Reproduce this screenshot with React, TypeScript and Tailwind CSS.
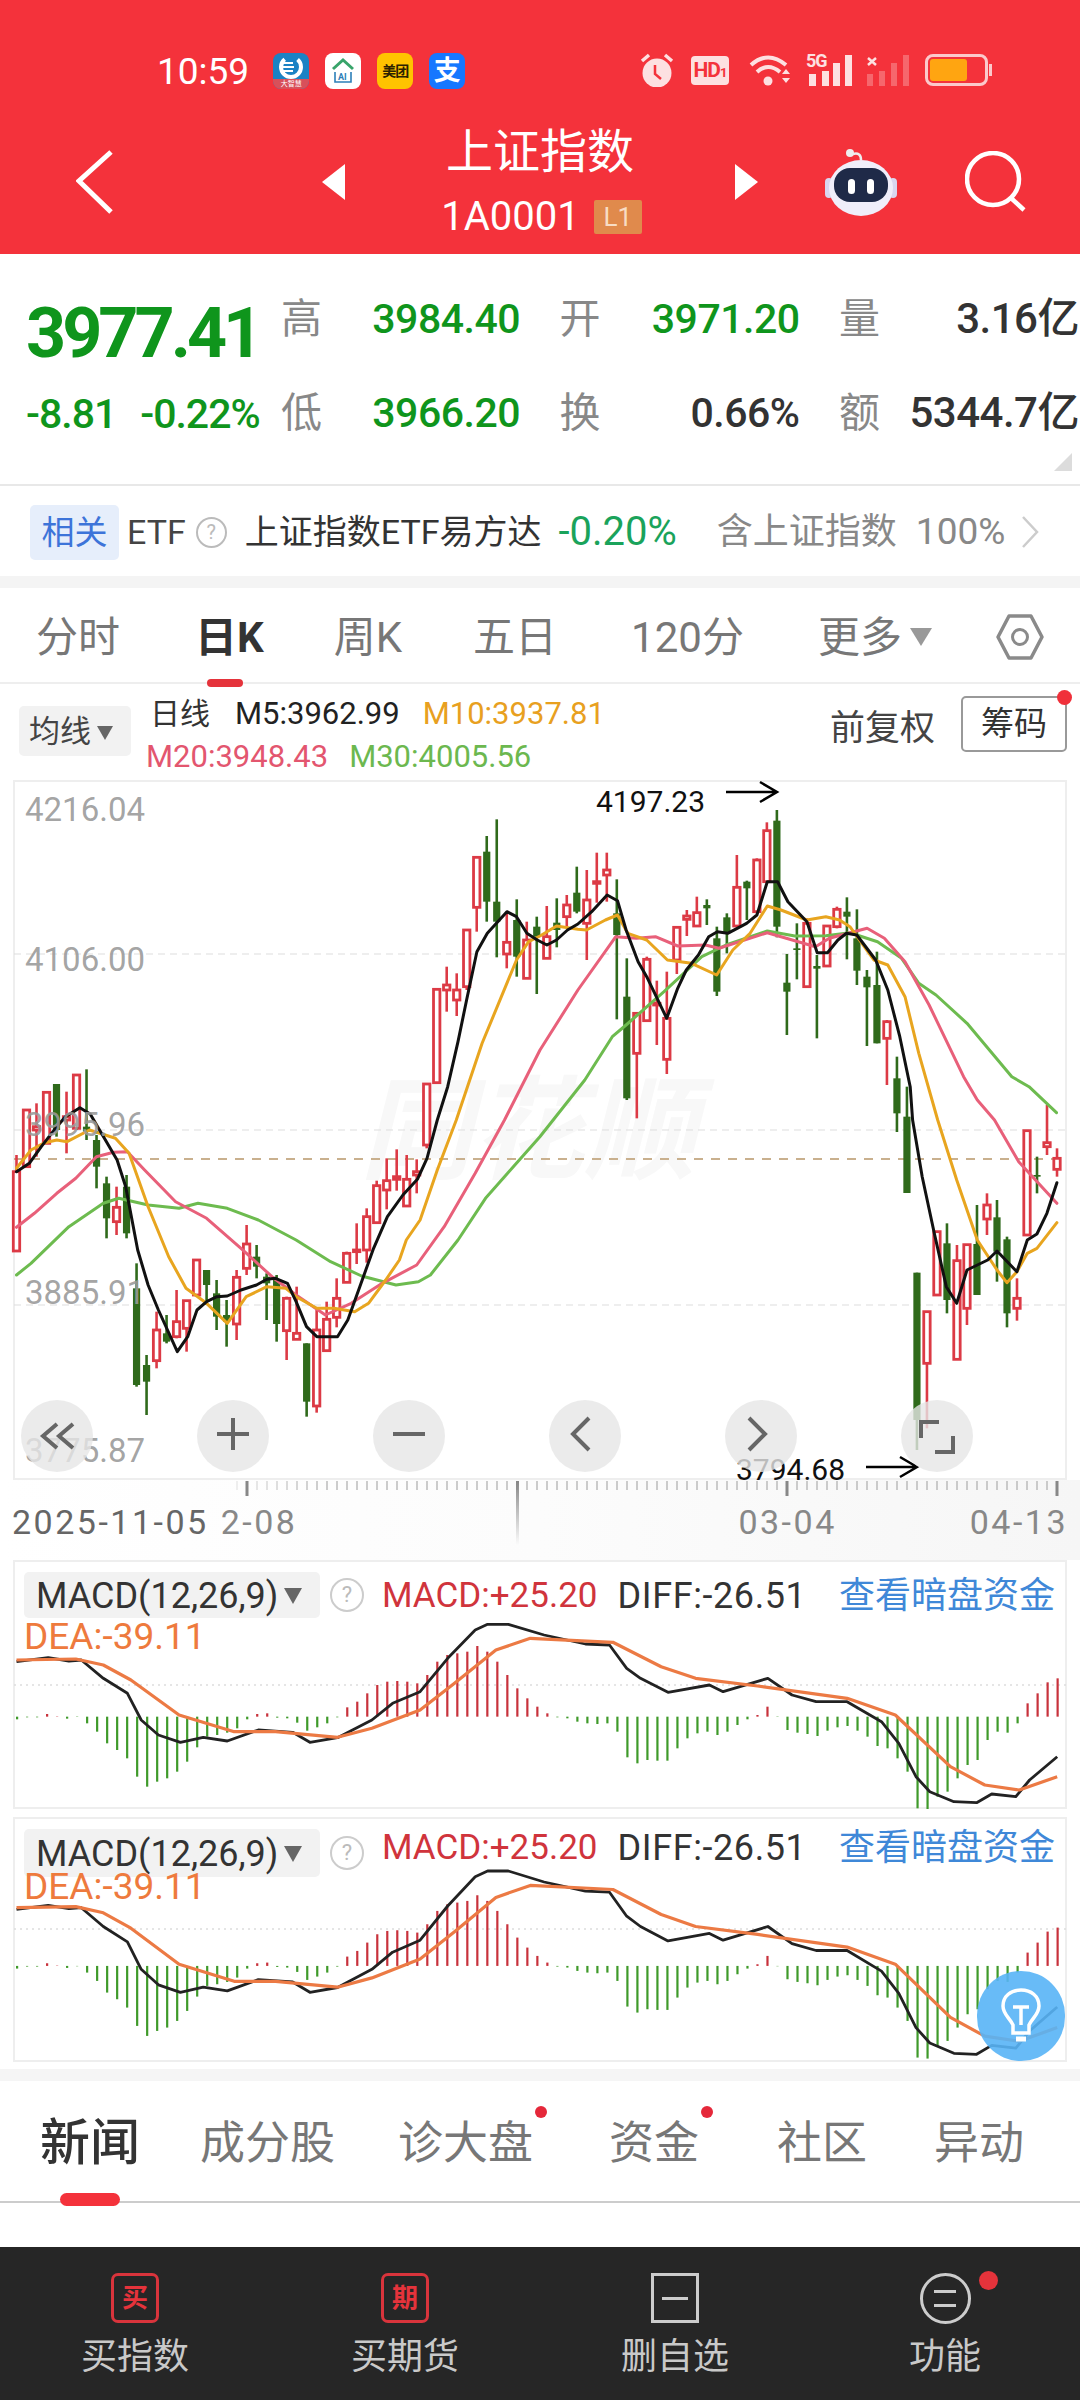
import React from 'react';

// page coordinates for the points read off the reference
const map = (ox: number, oy: number, sx: number) => (flat: number[]) => {
  const out: number[][] = [];
  for (let i = 0; i < flat.length; i += 2) out.push([ox + flat[i] / sx, oy + flat[i + 1] / 3]);
  return out;
};
const z3 = map(0, 770, 2.904);
const z4 = map(540, 770, 2.904);
const z5 = map(0, 1120, 2.904);
const z6 = map(540, 1120, 2.904);
const toPts = (p: number[][]) => p.map(([x, y]) => `${x.toFixed(1)},${y.toFixed(1)}`).join(' ');

const ma5 = [
  ...z5([48,155,85,130,120,80,165,20,190,-10]),
  ...z3([232,1013,262,1032]),
  ...z5([340,120,365,200,400,390,430,495,460,570,515,695,545,650,572,570,600,545,630,530,660,528,700,510,745,495,775,478,800,475,835,490,860,545,890,620,920,650,980,650,1010,600,1045,500,1085,385,1125,290,1170,225,1212,178,1240,115,1270,0]),
  ...z3([1300,950,1330,815,1355,690,1385,545,1415,490,1472,425,1500,440,1530,490,1560,510]),
  ...z4([20,525,48,510,80,480,110,462,150,425,195,375,225,392,250,480,285,575,310,620,368,745,400,655,425,600,460,555,490,500,515,485,545,490,600,460,630,435,660,335,690,335,720,395,775,455,805,548,835,548,865,510,890,490,920,495,975,570,1010,660,1045,800,1075,950,1082,1050]),
  ...z6([1110,170,1145,340,1180,500,1210,550,1240,450,1300,420,1327,393,1385,455,1415,360,1443,342,1472,280,1501,188]),
];
const ma10 = [
  ...z5([48,145,90,90,130,68,165,60,195,65,260,30,335,55,375,100,430,260,490,410,540,505,600,550,660,610,715,530,775,500,830,505,860,530,920,565,970,565,1030,575,1070,550,1120,480,1160,420,1180,360,1220,300,1270,150,1325,0]),
  ...z3([1400,820,1500,570,1535,515]),
  ...z4([0,498,48,468,110,478,135,480,190,450,225,435,255,490,310,510,370,570,440,580,513,615,560,540,610,490,660,408,700,420,775,450,830,440,870,450,900,470,970,570,1010,585,1060,680,1100,850,1155,1050]),
  ...z6([1210,180,1270,360,1327,450,1356,488,1385,455,1415,400,1443,385,1501,308]),
];
const ma20 = [
  ...z5([48,322,100,280,165,220,220,175,280,110,330,97,370,95,420,150,510,245,600,295,700,385,790,470,860,525,945,585,1020,550,1110,490,1210,435,1290,320,1380,160,1465,0]),
  ...z4([0,840,110,660,220,500,280,505,335,500,400,528,480,525,520,535,660,488,800,530,840,505,950,475,1000,505,1060,575,1130,705,1230,920,1270,990,1320,1050]),
  ...z6([1390,125,1501,250]),
];
const ma30 = [
  ...z5([48,465,90,430,200,320,300,250,345,235,430,255,520,265,575,250,660,265,750,300,860,360,960,425,1050,468,1150,495,1215,485,1250,465,1330,360,1410,235,1568,50]),
  ...z4([130,930,210,800,250,765,360,665,470,560,540,525,660,483,740,498,830,497,900,488,980,515,1050,565,1100,640,1150,675,1240,760,1370,920,1420,950,1500,1028]),
];

// [wickTop, bodyTop, bodyBottom, wickBottom, up]
const groups: { base: number; rows: number[][] }[] = [
  { base: 1060, rows: [[285,335,573,573,1],[150,150,320,320,1],[130,200,210,290,1],[97,97,250,250,1],[72,72,210,230,0],[95,170,180,280,1],[45,45,205,210,1],[28,200,215,240,0],[225,240,320,385,0]] },
  { base: 1120, rows: [
    [170,190,295,355,0],[200,262,305,345,1],[165,200,340,355,0],[430,505,795,800,0],[705,735,785,885,0],[575,630,722,745,1],[585,640,665,670,0],[510,605,650,655,1],[540,542,625,695,1],[420,420,525,530,1],[450,450,495,555,0],[480,520,590,630,0],[540,585,605,680,0],[450,472,612,660,1],[315,372,445,465,1],[375,410,440,475,0],[460,470,490,600,0],[465,480,612,665,0],[530,535,632,720,1],[500,640,658,660,1],[670,670,845,890,0],[570,630,858,878,1],[545,598,692,695,1],[475,535,592,622,1],[395,400,487,488,1],[310,390,395,432,1],[265,290,390,428,1],[182,197,308,310,1],[115,182,210,268,1],[88,170,178,212,1],[105,178,258,260,1],[118,155,165,220,1],[-108,-108,75,85,1],
  ] },
  { base: 770, rows: [
    [658,658,938,938,1],[590,645,660,725,1],[610,660,690,738,1],[480,480,650,660,1],[262,262,412,485,1],[198,245,395,455,0],[148,395,455,562,0],[425,517,552,595,1],[388,450,560,620,0],[455,510,625,625,1],[440,470,500,672,0],
    [408,500,565,565,1],[385,458,480,532,0],[375,405,440,470,1],[290,368,425,430,0],[300,390,460,570,1],[248,335,340,398,1],[248,300,315,395,1],[328,430,495,748,0],[565,680,985,990,0],[730,730,850,1045,1],[560,568,752,755,1],[632,700,705,825,1],[605,745,868,912,1],[470,472,570,612,1],[420,438,448,498,1],[380,428,468,470,1],[388,405,415,465,0],[470,505,665,678,0],[430,442,490,550,0],[255,352,468,470,1],[332,335,355,450,0],[265,270,425,430,1],[157,182,335,335,1],[120,152,470,502,0],[552,638,665,795,0],[460,535,540,628,0],[445,460,650,650,1],[555,588,596,805,0],[465,468,588,590,1],[410,418,470,475,1],[382,425,440,568,0],[418,505,602,645,0],[600,620,652,828,0],[545,645,820,820,0],[750,755,805,945,1],[860,925,1030,1086,0],[950,1040,1269,1269,0],
  ] },
  { base: 1120, rows: [
    [458,458,900,990,0],[575,575,730,925,1],[335,335,525,525,1],[310,370,540,580,0],[375,422,718,720,1],[372,374,565,615,1],[255,372,525,525,0],[220,255,297,345,1],[240,292,395,485,0],[350,358,580,622,0],[475,535,565,602,1],[32,32,345,345,1],[110,165,170,220,0],[-45,68,80,105,1],[85,115,148,170,1],
  ] },
];
const candles = groups.flatMap((g) => g.rows.map((r) => ({ wt: g.base + r[0] / 3, bt: g.base + r[1] / 3, bb: g.base + r[2] / 3, wb: g.base + r[3] / 3, up: r[4] === 1 })));

const bars = [-8,-2,-2,8,1,-6,-1,-20,-45,-80,-100,-125,-180,-210,-195,-185,-165,-135,-92,-60,-55,-48,-35,-8,8,10,-3,-5,-18,-42,-32,-20,-2,28,45,70,95,105,107,105,100,125,165,185,190,195,212,195,165,125,85,55,30,10,-2,-5,-15,-20,-22,-20,-45,-122,-140,-130,-132,-132,-95,-65,-50,-45,-55,-45,-25,-8,5,30,-1,-40,-48,-52,-58,-42,-32,-28,-42,-60,-88,-95,-125,-165,-275,-278,-240,-225,-185,-145,-130,-70,-45,-48,-20,40,70,103,115];
const diff = [24,335,70,323,100,333,118,330,150,385,185,430,205,510,230,555,262,577,295,562,330,573,375,540,425,547,450,577,490,563,540,510,570,460,610,425,650,325,690,240,708,223,738,223,790,255,850,282,885,285,910,355,930,385,970,427,1030,405,1050,425,1115,385,1150,435,1185,455,1230,455,1280,515,1305,580,1330,680,1350,725,1385,755,1418,758,1440,732,1475,740,1495,690,1535,620];
const dea = [24,330,110,327,150,345,190,390,260,495,340,545,400,545,490,562,540,535,610,480,660,400,720,300,770,265,890,277,960,350,1010,385,1100,408,1230,445,1300,495,1380,650,1430,705,1480,720,1535,680];

const StatusIcons = () => (
  <div className="ml-auto mr-[88px] flex items-center">
    <svg width="34" height="34" viewBox="0 0 34 34" className="mr-[17px]">
      <circle cx="17" cy="20" r="14.5" fill="#fde0e1" />
      <path d="M2 8 L9 2 M32 8 L25 2" stroke="#fde0e1" strokeWidth="3.5" />
      <path d="M15 12 L15 21 L21 26" stroke="#f4323b" strokeWidth="2.5" fill="none" />
    </svg>
    <div className="w-[38px] h-[29px] mr-[20px] rounded-[4px] bg-[#fde0e1] flex items-baseline justify-center text-[#f4323b] font-bold text-[21px] leading-[29px] tracking-[-1px]">
      HD<span className="text-[13px]">1</span>
    </div>
    <svg width="43" height="32" viewBox="0 0 43 32" className="mr-[14px]">
      <g fill="none" stroke="#fde0e1" strokeWidth="4">
        <path d="M2 11 Q19 -4 37 11" />
        <path d="M8 18 Q19 8 31 18" />
      </g>
      <circle cx="19" cy="27" r="4.5" fill="#fde0e1" />
      <path d="M33 20 L37 15 L41 20 Z M33 24 L41 24 L37 29 Z" fill="#fde0e1" />
    </svg>
    <div className="relative w-[48px] h-[32px] mr-[12px]">
      <span className="absolute left-0 -top-[2px] text-[18px] leading-[18px] font-bold text-[#fde0e1] tracking-[-1px]">5G</span>
      <svg width="48" height="32" viewBox="0 0 48 32">
        <g fill="#fde0e1">
          <rect x="3" y="20" width="7" height="12" />
          <rect x="16" y="17" width="7" height="15" />
          <rect x="27" y="9" width="7" height="23" />
          <rect x="39" y="1" width="7" height="31" />
        </g>
      </svg>
    </div>
    <svg width="44" height="32" viewBox="0 0 44 32" className="mr-[15px]">
      <path d="M2 4 L10 11 M10 4 L2 11" stroke="#fde0e1" strokeWidth="2.5" />
      <g fill="#fde0e1" opacity="0.3">
        <rect x="1" y="20" width="6" height="12" />
        <rect x="13" y="17" width="6" height="15" />
        <rect x="25" y="9" width="6" height="23" />
        <rect x="37" y="1" width="6" height="31" />
      </g>
    </svg>
    <div className="w-[63px] h-[32px] rounded-[8px] border-[3px] border-[#fbc9cb] p-[2px]">
      <div className="w-[37px] h-full rounded-[3px] bg-[#ffa511]" />
    </div>
    <div className="w-[3px] h-[12px] ml-[1px] bg-[#fbc9cb]" />
  </div>
);

const AppIcons = () => (
  <div className="flex ml-[24px] gap-[16px]">
    <div className="w-[36px] h-[36px] rounded-[8px] bg-[#1b82c4] flex flex-col items-center overflow-hidden">
      <svg width="26" height="26" viewBox="0 0 26 26">
        <circle cx="13" cy="14" r="10" fill="none" stroke="#fff" strokeWidth="4" strokeDasharray="40 14" />
        <path d="M4 10 H15 M4 14 H16 M4 18 H15" stroke="#fff" strokeWidth="2" />
      </svg>
      <div className="w-full flex-1 bg-[#d8505a] text-white text-[7px] leading-[10px] text-center">大智慧</div>
    </div>
    <div className="w-[36px] h-[36px] rounded-[8px] bg-white flex items-center justify-center">
      <svg width="28" height="28" viewBox="0 0 28 28">
        <path d="M4 12 L14 3 L24 12" fill="none" stroke="#38a46a" strokeWidth="3" />
        <path d="M6 15 V25 H22 V15" fill="none" stroke="#2c7fb8" strokeWidth="1.6" />
        <text x="9" y="23" fontSize="9" fontWeight="700" fill="#2c7fb8" fontFamily="Roboto">AI</text>
      </svg>
    </div>
    <div className="w-[36px] h-[36px] rounded-[8px] bg-[#ffc300] flex items-center justify-center text-[14px] font-bold text-[#2c2200] tracking-[-1px]">美团</div>
    <div className="w-[36px] h-[36px] rounded-[8px] bg-[#1677ff] flex items-center justify-center text-[27px] text-white font-bold">支</div>
  </div>
);

const Header = () => (
  <div className="h-[254px] shrink-0 bg-[#f4323b] text-white flex flex-col">
    <div className="h-[125px] shrink-0 pt-[53px] pl-[157px] flex items-start">
      <span className="text-[37px] leading-[38px]">10:59</span>
      <AppIcons />
      <StatusIcons />
    </div>
    <div className="flex-1 pb-[15px] pl-[76px] flex items-center">
      <svg width="38" height="66" viewBox="0 0 38 66">
        <path d="M35 3 L3 32 L35 63" fill="none" stroke="#fff" strokeWidth="5" />
      </svg>
      <svg width="24" height="36" viewBox="0 0 24 36" className="ml-[208px]">
        <path d="M23 0 V36 L0 18 Z" fill="#fff" />
      </svg>
      <div className="w-[388px] flex flex-col items-center">
        <div className="text-[47px] leading-[50px]">上证指数</div>
        <div className="mt-[20px] h-[40px] flex items-center">
          <span className="text-[40px] leading-[40px] ml-[3px]">1A0001</span>
          <span className="ml-[14px] w-[48px] h-[34px] bg-[#e08a4c] rounded-[2px] text-[#f8dcc4] text-[26px] leading-[34px] text-center">L1</span>
        </div>
      </div>
      <svg width="24" height="36" viewBox="0 0 24 36">
        <path d="M1 0 V36 L24 18 Z" fill="#fff" />
      </svg>
      <svg width="72" height="68" viewBox="0 0 72 68" className="ml-[67px]">
        <path d="M36 12 Q36 4 28 6" fill="none" stroke="#eee" strokeWidth="2.5" />
        <circle cx="25" cy="5" r="4" fill="#eee" />
        <rect x="0" y="30" width="8" height="20" rx="4" fill="#d9d6ef" />
        <rect x="64" y="30" width="8" height="20" rx="4" fill="#d9d6ef" />
        <ellipse cx="36" cy="40" rx="32" ry="28" fill="#f0eefa" />
        <rect x="9" y="20" width="54" height="34" rx="16" fill="#1f2a48" />
        <rect x="23" y="31" width="7" height="15" rx="3.5" fill="#fff" />
        <rect x="42" y="31" width="7" height="15" rx="3.5" fill="#fff" />
      </svg>
      <svg width="62" height="62" viewBox="0 0 62 62" className="ml-[68px]">
        <circle cx="28" cy="28" r="26" fill="none" stroke="#fff" strokeWidth="4.5" />
        <path d="M46 47 L59 59" stroke="#fff" strokeWidth="4.5" />
      </svg>
    </div>
  </div>
);

const Cell = ({ label, value, green, big }: { label: string; value: string; green?: boolean; big?: boolean }) => (
  <div className="flex justify-between items-center h-[56px] pt-[2px]">
    <span className="text-[41px] leading-[54px] text-[#888]">{label}</span>
    <span className={`leading-[54px] font-medium ${big ? 'text-[42px] tracking-[-0.5px]' : 'text-[41px] tracking-[-0.5px]'} ${green ? 'text-[#0f951c]' : 'text-[#333]'}`}>{value}</span>
  </div>
);

const Quote = () => (
  <div className="relative h-[232px] shrink-0 border-b-2 border-[#e8e8e8] flex">
    <div className="w-[281px] shrink-0 pl-[26px] pt-[44px]">
      <div className="text-[70px] leading-[70px] font-bold text-[#0f951c] tracking-[-4px]">3977.41</div>
      <div className="mt-[26px] flex text-[41px] leading-[40px] font-medium text-[#0f951c] tracking-[-1px]">
        <span>-8.81</span>
        <span className="ml-[24px]">-0.22%</span>
      </div>
    </div>
    <div className="pt-[36px] w-[799px] grid grid-cols-[239px_240px_240px] gap-x-[39.5px] gap-y-[38px] content-start">
      <Cell label="高" value="3984.40" green />
      <Cell label="开" value="3971.20" green />
      <Cell label="量" value="3.16亿" big />
      <Cell label="低" value="3966.20" green />
      <Cell label="换" value="0.66%" />
      <Cell label="额" value="5344.7亿" big />
    </div>
    <svg width="18" height="18" viewBox="0 0 18 18" className="absolute left-[1054px] top-[199px]">
      <path d="M18 0 V18 H0 Z" fill="#dcdcdc" />
    </svg>
  </div>
);

const EtfRow = () => (
  <div className="h-[90px] shrink-0 pl-[30px] pt-[2px] flex items-center text-[34px]">
    <div className="w-[89px] h-[55px] rounded-[5px] bg-[#e6eefb] text-[#3d74d9] text-[33px] leading-[55px] text-center">相关</div>
    <span className="ml-[8px] text-[#444]">ETF</span>
    <span className="ml-[10px] w-[31px] h-[31px] rounded-full border-2 border-[#bbb] text-[#bbb] text-[20px] leading-[27px] text-center">?</span>
    <span className="ml-[18px] text-[#333] whitespace-nowrap text-[34px]">上证指数ETF易方达</span>
    <span className="ml-[17px] text-[#1aa35b] text-[40px]">-0.20%</span>
    <span className="ml-[40px] text-[#888] text-[36px]">含上证指数</span>
    <span className="ml-[19px] text-[#888] text-[37px]">100%</span>
    <svg width="18" height="34" viewBox="0 0 18 34" className="ml-[16px]">
      <path d="M2 2 L16 17 L2 32" fill="none" stroke="#ccc" strokeWidth="2.5" />
    </svg>
  </div>
);

const PeriodTabs = () => (
  <div className="h-[96px] shrink-0 pt-[4px] border-b-2 border-[#eee] flex items-center text-[42px] text-[#777]">
    <span className="ml-[36px]">分时</span>
    <span className="ml-[75px] relative font-bold text-[#333]">
      日K
      <span className="absolute left-[12px] bottom-[-18px] w-[36px] h-[8px] rounded-full bg-[#e5333b]" />
    </span>
    <span className="ml-[70px]">周K</span>
    <span className="ml-[71px]">五日</span>
    <span className="ml-[74px]">120分</span>
    <span className="ml-[74px]">更多</span>
    <svg width="22" height="18" viewBox="0 0 22 18" className="ml-[8px]">
      <path d="M0 0 H22 L11 18 Z" fill="#999" />
    </svg>
    <svg width="48" height="46" viewBox="0 0 48 46" className="ml-[64px]">
      <path d="M2 23 L13 2 H35 L46 23 L35 44 H13 Z" fill="none" stroke="#8a8a8a" strokeWidth="3.5" strokeLinejoin="round" />
      <circle cx="24" cy="23" r="7.5" fill="none" stroke="#8a8a8a" strokeWidth="3" />
    </svg>
  </div>
);

const Legend = () => (
  <div className="h-[96px] shrink-0 flex">
    <div className="ml-[19px] mt-[22px] w-[112px] h-[50px] rounded-[5px] bg-[#f2f2f2] flex items-center pl-[10px] pt-[3px] text-[31px] text-[#444]">
      均线
      <svg width="16" height="14" viewBox="0 0 16 14" className="ml-[6px]">
        <path d="M0 0 H16 L8 14 Z" fill="#666" />
      </svg>
    </div>
    <div className="ml-[19px] pt-[10px] text-[31px] leading-[40px]">
      <div className="flex">
        <span className="text-[#333] text-[30px]">日线</span>
        <span className="ml-[25px] text-[#222]">M5:3962.99</span>
        <span className="ml-[23px] text-[#e8a020]">M10:3937.81</span>
      </div>
      <div className="flex mt-[3px] -ml-[4px]">
        <span className="text-[#e3566f]">M20:3948.43</span>
        <span className="ml-[21px] text-[#6cb84f]">M30:4005.56</span>
      </div>
    </div>
    <span className="ml-auto mt-[23px] text-[35px] leading-[44px] text-[#444]">前复权</span>
    <div className="relative ml-[26px] mr-[13px] mt-[12px] w-[106px] h-[56px] rounded-[5px] border-2 border-[#999] text-[#333] text-[33px] leading-[52px] text-center">
      筹码
      <span className="absolute right-[-7px] top-[-8px] w-[15px] h-[15px] rounded-full bg-[#f0303a]" />
    </div>
  </div>
);

const KChart = () => (
  <div className="relative mx-[13px] h-[700px] w-[1054px] shrink-0 border-2 border-[#eee]">
    <span className="absolute left-[345px] top-[290px] text-[112px] leading-[120px] font-bold italic text-[#f8f8f8] whitespace-nowrap">同花顺</span>
    <svg width="1054" height="700" viewBox="13 780 1054 700" className="absolute -left-[2px] -top-[2px] overflow-visible">
      <g stroke="#ddd" strokeWidth="1" strokeDasharray="7 5">
        <path d="M14 954 H1066 M14 1130 H1066 M14 1305 H1066" />
      </g>
      <path d="M14 1159 H1066" stroke="#c9b08e" strokeWidth="2" strokeDasharray="9 8" />
      {candles.map((c, i) => {
        const x = 16.5 + 10.005 * i;
        const color = c.up ? '#dc3a45' : '#2f6a1b';
        return (
          <g key={i}>
            <path d={`M${x} ${c.wt} V${c.wb}`} stroke={color} strokeWidth="2.6" />
            {c.up ? (
              <rect x={x - 3.2} y={c.bt} width="6.4" height={Math.max(c.bb - c.bt, 1)} fill="#fff" stroke={color} strokeWidth="2.8" />
            ) : (
              <rect x={x - 3.6} y={c.bt} width="7.2" height={Math.max(c.bb - c.bt, 1)} fill={color} />
            )}
          </g>
        );
      })}
      <g fill="none" strokeWidth="3" strokeLinejoin="round" strokeLinecap="round">
        <polyline points={toPts(ma30)} stroke="#6dbb4f" />
        <polyline points={toPts(ma20)} stroke="#e8607a" />
        <polyline points={toPts(ma10)} stroke="#e8a51f" />
        <polyline points={toPts(ma5)} stroke="#111" />
      </g>
      <g fill="none" stroke="#000" strokeWidth="2.5">
        <path d="M726 792 H776 M760 782 L777 792 L760 802" />
        <path d="M866 1467 H916 M900 1457 L917 1467 L900 1477" />
      </g>
    </svg>
    {[
      ['4216.04', 'top-[8px]'],
      ['4106.00', 'top-[158px]'],
      ['3995.96', 'top-[323px]'],
      ['3885.91', 'top-[491px]'],
      ['3775.87', 'top-[649px]'],
    ].map(([t, top]) => (
      <span key={t} className={`absolute left-[10px] ${top} text-[33px] leading-[40px] text-[#999]/90`}>{t}</span>
    ))}
    <span className="absolute left-[581px] top-[3px] text-[30px] leading-[34px] text-[#111]">4197.23</span>
    <span className="absolute left-[721px] top-[671px] text-[30px] leading-[34px] text-[#111]">3794.68</span>
    <div className="absolute left-[6px] top-[618px] w-[952px] flex justify-between">
      {[
        <path key="a" d="M18 8 L4 20 L18 32 M34 8 L20 20 L34 32" />,
        <path key="b" d="M18 2 V34 M2 18 H34" />,
        <path key="c" d="M2 18 H34" />,
        <path key="d" d="M22 2 L6 18 L22 34" />,
        <path key="e" d="M6 2 L22 18 L6 34" />,
        <path key="f" d="M20 6 H2 V22 M16 36 H34 V20" />,
      ].map((icon, i) => (
        <div key={i} className="w-[72px] h-[72px] rounded-full bg-[#e6e6e6]/80 flex items-center justify-center">
          <svg width="36" height="40" viewBox="0 0 36 40" fill="none" stroke="#666" strokeWidth="4">{icon}</svg>
        </div>
      ))}
    </div>
  </div>
);

const Axis = () => (
  <div className="relative h-[80px] shrink-0 bg-linear-to-r from-white via-[#fcfcfc] to-[#f6f6f6] overflow-hidden">
    <svg width="1080" height="80" viewBox="0 1480 1080 80" className="absolute inset-0">
      <defs>
        <linearGradient id="tail" x1="0" y1="0" x2="0" y2="1">
          <stop offset="0" stopColor="#888" />
          <stop offset="1" stopColor="#888" stopOpacity="0" />
        </linearGradient>
      </defs>
      {Array.from({ length: 83 }, (_, i) => (
        <path key={i} d={`M${237 + 10 * i} 1481 V1490`} stroke="#bbb" strokeWidth="1.5" opacity={Math.min(1, 0.3 + i * 0.08)} />
      ))}
      <path d="M247 1481 V1496 M787 1481 V1496 M1057 1481 V1496" stroke="#888" strokeWidth="3" />
      <rect x="516" y="1481" width="3" height="64" fill="url(#tail)" />
    </svg>
    <div className="absolute left-[12px] top-[22px] flex text-[34px] leading-[40px] tracking-[2.5px] whitespace-nowrap text-[#888]">
      <span className="text-[#666]">2025-11-05</span>
      <span className="ml-[12px]">2-08</span>
      <span className="ml-[441px]">03-04</span>
      <span className="ml-[133px]">04-13</span>
    </div>
  </div>
);

const MacdPanel = ({ second }: { second?: boolean }) => {
  const base = second ? 1817 : 1560;
  const h = second ? 245 : 249;
  const fy = (y: number) => (second ? 1550 + (y + 740 + (y - 223) * 0.028) / 3 : 1550 + y / 3);
  const line = (flat: number[]) => {
    const p: number[][] = [];
    for (let i = 0; i < flat.length; i += 2) p.push([flat[i] / 1.452, fy(flat[i + 1])]);
    return toPts(p);
  };
  const up = second ? 'mb-[12px]' : '';
  return (
    <div className={`relative mx-[13px] w-[1054px] shrink-0 border-2 border-[#eee] ${second ? 'h-[245px] mt-[8px]' : 'h-[249px]'}`}>
      <svg width="1054" height={h} viewBox={`13 ${base} 1054 ${h}`} className="absolute -left-[2px] -top-[2px]">
        <path d={`M14 ${fy(second ? 392 : 405)} H1066`} stroke="#ddd" strokeWidth="1.5" strokeDasharray="2 4" />
        {bars.map((v, i) => (
          <rect
            key={i}
            x={16 + 10.005 * i}
            y={v > 0 ? fy(500) - v / 3 : fy(500)}
            width="2.2"
            height={Math.abs(v) / 3}
            fill={v > 0 ? '#c8323c' : '#3f9a2a'}
          />
        ))}
        <g fill="none" strokeLinejoin="round">
          <polyline points={line(diff)} stroke="#222" strokeWidth="2.8" />
          <polyline points={line(dea)} stroke="#ec7a44" strokeWidth="3.2" />
        </g>
      </svg>
      <div className="relative">
        <div className={`flex items-center pt-[10px] leading-[46px] ${second ? 'h-[58px]' : 'h-[56px]'}`}>
          <div className={`ml-[9px] w-[296px] rounded-[5px] bg-[#f2f2f2] flex items-center pl-[12px] pt-[2px] text-[#333] text-[36px] ${second ? 'h-[48px]' : 'h-[46px]'}`}>
            MACD(12,26,9)
            <svg width="18" height="16" viewBox="0 0 18 16" className="ml-[6px]">
              <path d="M0 0 H18 L9 16 Z" fill="#666" />
            </svg>
          </div>
          <span className="ml-[10px] w-[34px] h-[34px] rounded-full border-2 border-[#ccc] text-[#bbb] text-[22px] leading-[30px] text-center">?</span>
          <span className={`ml-[18px] pt-[2px] text-[#d0343c] text-[35px] ${up}`}>MACD:+25.20</span>
          <span className={`ml-[20px] pt-[2px] text-[#333] text-[36px] tracking-[0.6px] ${up}`}>DIFF:-26.51</span>
          <span className={`ml-auto mr-[10px] pt-[2px] text-[#3f88d8] text-[36px] ${up}`}>查看暗盘资金</span>
        </div>
        <div className={`ml-[9px] text-[#ee7a3d] text-[37px] leading-[34px] ${second ? '-mt-[7px]' : 'mt-[2px]'}`}>DEA:-39.11</div>
      </div>
      {second && (
        <div className="absolute right-0 bottom-[-1px] w-[88px] h-[90px] rounded-full bg-[#58b4f6]/90 flex items-center justify-center">
          <svg width="44" height="58" viewBox="0 0 44 58" fill="none" stroke="#fff" strokeWidth="3.5">
            <path d="M14 38 C10 30 4 27 4 19 C4 9 12 3 22 3 C32 3 40 9 40 19 C40 27 34 30 30 38 V46 H14 Z" />
            <path d="M14 20 H30 M22 20 V38" />
            <path d="M17 52 H27" strokeWidth="5" />
          </svg>
        </div>
      )}
    </div>
  );
};

const NewsTabs = () => (
  <div className="h-[120px] shrink-0 pt-[5px] flex items-center text-[45px] text-[#777]">
    <span className="ml-[40px] relative text-[50px] font-medium text-[#333]">
      新闻
      <span className="absolute left-[20px] bottom-[-25px] w-[60px] h-[13px] rounded-full bg-[#f4323b]" />
    </span>
    <span className="ml-[60px]">成分股</span>
    <span className="ml-[63px] relative">
      诊大盘
      <span className="absolute right-[-14px] top-[-4px] w-[12px] h-[12px] rounded-full bg-[#e5283a]" />
    </span>
    <span className="ml-[76px] relative">
      资金
      <span className="absolute right-[-14px] top-[-4px] w-[12px] h-[12px] rounded-full bg-[#e5283a]" />
    </span>
    <span className="ml-[78px]">社区</span>
    <span className="ml-[67px]">异动</span>
  </div>
);

const NavItem = ({ label, icon }: { label: string; icon: React.ReactNode }) => (
  <div className="flex flex-col items-center">
    <div className="relative h-[50px]">{icon}</div>
    <span className="mt-[14px] text-[36px] leading-[40px] text-[#c9c9c9]">{label}</span>
  </div>
);

const BottomNav = () => (
  <div className="flex-1 bg-[#262626] grid grid-cols-4 pt-[26px] items-start">
    <NavItem
      label="买指数"
      icon={<div className="w-[48px] h-[50px] rounded-[7px] border-[3px] border-[#d9343c] text-[#e5333b] font-bold text-[26px] leading-[44px] text-center">买</div>}
    />
    <NavItem
      label="买期货"
      icon={<div className="w-[48px] h-[50px] rounded-[7px] border-[3px] border-[#d9343c] text-[#e5333b] font-bold text-[26px] leading-[44px] text-center">期</div>}
    />
    <NavItem
      label="删自选"
      icon={
        <div className="w-[48px] h-[50px] border-[3px] border-[#ccc] flex items-center justify-center">
          <div className="w-[26px] h-[3px] bg-[#ccc]" />
        </div>
      }
    />
    <NavItem
      label="功能"
      icon={
        <>
          <div className="w-[51px] h-[51px] rounded-full border-[3px] border-[#ccc] flex flex-col items-center justify-center gap-[11px]">
            <div className="w-[22px] h-[3px] bg-[#ccc]" />
            <div className="w-[22px] h-[3px] bg-[#ccc]" />
          </div>
          <span className="absolute left-[59px] top-[-2px] w-[19px] h-[19px] rounded-full bg-[#e5333b]" />
        </>
      }
    />
  </div>
);

export default function App() {
  return (
    <div className="w-[1080px] h-[2400px] overflow-hidden bg-white flex flex-col font-[family-name:Roboto,'Noto_Sans_CJK_SC',sans-serif]">
      <Header />
      <Quote />
      <EtfRow />
      <div className="h-[12px] shrink-0 bg-[#f4f4f4]" />
      <PeriodTabs />
      <Legend />
      <KChart />
      <Axis />
      <MacdPanel />
      <MacdPanel second />
      <div className="h-[12px] mt-[7px] shrink-0 bg-[#f5f5f5]" />
      <NewsTabs />
      <div className="h-[46px] shrink-0 border-t-2 border-[#ccc]" />
      <BottomNav />
    </div>
  );
}
